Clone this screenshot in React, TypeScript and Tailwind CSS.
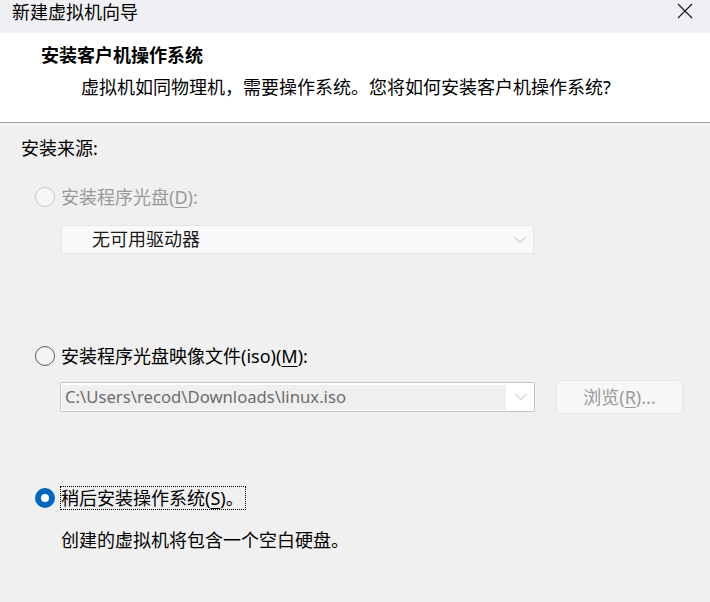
import React from "react";

const FONT = '"Noto Sans", "Noto Sans CJK SC", sans-serif';

function Chevron({ color }: { color: string }) {
  return (
    <svg width="12" height="8" viewBox="0 0 12 8" fill="none">
      <path d="M0.5 1 L6 6.5 L11.5 1" stroke={color} strokeWidth="1" />
    </svg>
  );
}

function Radio({ state }: { state: "disabled" | "off" | "on" }) {
  if (state === "on") {
    return (
      <div className="w-[20px] h-[20px] rounded-full bg-[#0067c0] flex items-center justify-center shrink-0">
        <div className="w-[8px] h-[8px] rounded-full bg-white" />
      </div>
    );
  }
  if (state === "disabled") {
    return <div className="w-[20px] h-[20px] rounded-full border border-[#c8c8c8] bg-[#f7f7f7] shrink-0" />;
  }
  return <div className="w-[20px] h-[20px] rounded-full border border-[#5a5a5a] bg-[#f4f4f4] shrink-0" />;
}

export default function App() {
  return (
    <div className="w-[710px] h-[602px] bg-[#f0f0f0] flex flex-col overflow-hidden text-[18px] text-[#1a1a1a]" style={{ fontFamily: FONT }}>
      {/* Title bar */}
      <div className="h-[33px] bg-[#eff0f4] flex items-start justify-between pl-[12px] pr-[17px] shrink-0">
        <span className="text-[18px] leading-[24px] text-black">新建虚拟机向导</span>
        <svg className="mt-[3px]" width="16" height="16" viewBox="0 0 16 16" fill="none">
          <path d="M1 1 L15 15 M15 1 L1 15" stroke="#1a1a1a" strokeWidth="1.2" />
        </svg>
      </div>

      {/* Header */}
      <div className="h-[90px] bg-white border-b border-[#a0a0a0] shrink-0 pt-[10px]">
        <div className="pl-[41px] font-bold text-[18px] leading-[24px] text-black">安装客户机操作系统</div>
        <div className="pl-[81px] mt-[8px] text-[18px] leading-[24px] text-black whitespace-nowrap">
          虚拟机如同物理机，需要操作系统。您将如何安装客户机操作系统?
        </div>
      </div>

      {/* Body */}
      <div className="flex flex-col pl-[21px] pt-[13px]">
        <div className="leading-[24px] text-black">安装来源:</div>

        <div className="flex items-center gap-[6px] ml-[14px] mt-[25px] h-[24px]">
          <Radio state="disabled" />
          <span className="text-[#9a9a9a]">
            安装程序光盘(<span className="underline underline-offset-[3px]">D</span>):
          </span>
        </div>

        <div className="ml-[40px] mt-[16px] w-[473px] h-[29px] bg-[#fafafa] border border-[#e6e6e6] rounded-[2px] flex items-center justify-between pl-[30px] pr-[7px]">
          <span className="text-[#1a1a1a]">无可用驱动器</span>
          <Chevron color="#b4b4b4" />
        </div>

        <div className="flex items-center gap-[6px] ml-[14px] mt-[90px] h-[24px]">
          <Radio state="off" />
          <span className="text-black">
            安装程序光盘映像文件(iso)(<span className="underline underline-offset-[3px]">M</span>):
          </span>
        </div>

        <div className="flex items-center mt-[12px] h-[34px] ml-[39px]">
          <div className="w-[475px] h-[30px] bg-white border border-[#c4c4c4] rounded-[2px] flex items-center pl-[1px] pr-[7px]">
            <div className="w-[444px] h-[25px] bg-[#efefef] flex items-center pl-[3px] text-[16.7px] text-[#6d6d6d] leading-none whitespace-nowrap">
              C:\Users\recod\Downloads\linux.iso
            </div>
            <div className="flex-1 flex justify-end">
              <Chevron color="#b4b4b4" />
            </div>
          </div>
          <div className="ml-[21px] w-[127px] h-[34px] bg-[#f7f7f7] border border-[#e6e6e6] rounded-[4px] flex items-center justify-center text-[#9a9a9a]">
            浏览(<span className="underline underline-offset-[3px]">R</span>)...
          </div>
        </div>

        <div className="flex items-center gap-[5px] ml-[14px] mt-[72px] h-[24px]">
          <Radio state="on" />
          <span className="border border-dotted border-black h-[24px] flex items-center pr-[1px] text-black whitespace-nowrap">
            稍后安装操作系统(<span className="underline underline-offset-[3px]">S</span>)。
          </span>
        </div>

        <div className="ml-[40px] mt-[18px] leading-[24px] text-black">创建的虚拟机将包含一个空白硬盘。</div>
      </div>
    </div>
  );
}
